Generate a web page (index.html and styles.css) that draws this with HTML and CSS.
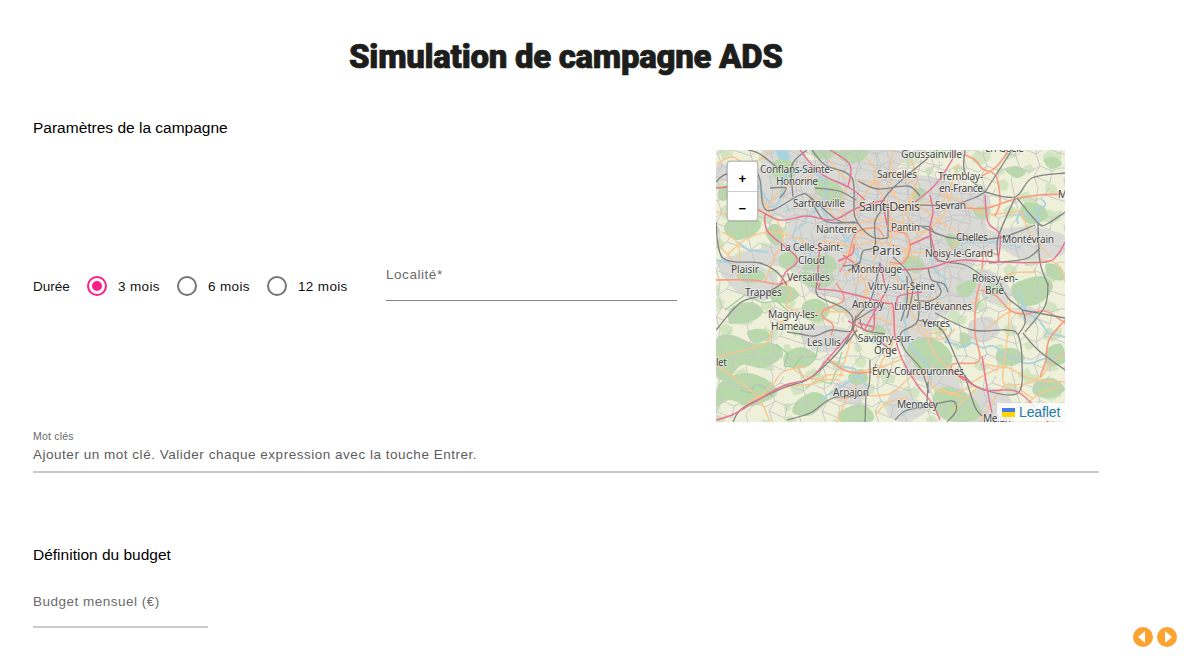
FILE: index.html
```html
<!DOCTYPE html>
<html lang="fr">
<head>
<meta charset="utf-8">
<title>Simulation de campagne ADS</title>
<link rel="stylesheet" href="styles.css">
</head>
<body>
<main class="page">
  <h1 class="title">Simulation de campagne ADS</h1>
  <h2 class="section-title">Paramètres de la campagne</h2>
  <div class="params">
    <div class="duration">
      <span class="duration-label">Durée</span>
      <label class="radio"><span class="dot checked"></span><span class="w3">3 mois</span></label>
      <label class="radio"><span class="dot"></span><span class="w3">6 mois</span></label>
      <label class="radio"><span class="dot"></span><span class="w12">12 mois</span></label>
    </div>
    <div class="locality"><span class="field-label">Localité*</span></div>
    <div class="map">
      <svg class="map-canvas" viewBox="716 150 349 272" preserveAspectRatio="none">
        <defs>
          <pattern id="lanes" width="53" height="47" patternUnits="userSpaceOnUse">
            <path d="M0 12L9 15L17 8L29 13L38 7L53 12M9 15L13 27L4 38L6 47M29 13L33 25L27 35L31 47M13 27L24 31L33 25L45 30L53 27M0 27L13 27M38 7L42 0M6 0L9 15M45 30L43 42L27 35M31 0L29 13"/>
          </pattern>
          <pattern id="woods" width="71" height="59" patternUnits="userSpaceOnUse">
            <path d="M3 5l7-3 5 5-3 7-8-2zM25 18l9-4 3 6 7 1-2 8-11 1-2-6-5-1zM52 6l9 2 4 8-8 1-6-4zM9 33l6-5 8 4-1 7-9 3zM49 37l6-5 5 3 8-2-1 9-9 5-9-3zM29 49l7-3 5 5-7 5zM2 50l6-1 3 6-7 3z"/>
          </pattern>
          <pattern id="streets" width="31" height="29" patternUnits="userSpaceOnUse">
            <path d="M0 7L8 10L18 5L31 7M8 10L10 21L5 29M18 5L22 16L10 21L0 19M22 16L31 19M22 16L19 29M5 0L8 10M19 0L18 5"/>
          </pattern>
        </defs>
        <path class="land" d="M716 150h349v272H716z"/>
        <path class="wood-dots" d="M716 150h349v272H716z"/>
        <g class="town curved">
          <path d="M765 150l35 0 12 10 45-10 50 0-10 22 30 4 32 8 25 5 7 18-5 20 18 8 0 12-22 8-10 18 8 15-5 22-25 2-18 16 3 28 18 18 12 24-10 4-20-16-26-10-6-26-12-14-20-10-22-6-12-22-25-5-12-18-18-8-38-4 2-12 28-5 14-15-8-14-26-9-8-24 14-16z"/>
          <path d="M718 262l18-6 28 12 14 14-12 18-25-6-15-14zM800 334l18-9 30 5-3 16-28 6zM835 384l20-4 14 10-12 14-20-4zM893 390l18 6 16 14-22 12-18-9zM980 270l18 5 14 18-12 12-17-8zM997 232l32-5 36 9-3 19-36 4-20-8zM970 322l20-5 10 14-14 11-16-4zM970 397l24-8 18 13-8 20-33 0zM718 163l14 6-4 11-10 0zM1022 306l14 4-1 12-12-2z"/>
        </g>
        <g class="wood curved">
          <path d="M773 163l10-5 10 5 3 11-11 5-13-4zM812 150l26 0-8 8-14 0zM841 150l26 0-3 9-14 4-11-5zM820 177l17 6 8 12-9 8-14-5-8-10zM727 222l18-5 16 5-6 12-18 6-12-8zM765 232l9-8 9 5-1 13-8 3zM719 190l7-5 6 8-8 8-6-4zM837 265l-8-10-16 2-10 12 12 4 9-4 5 6zM780 256l13-4 6 10-10 8-9-5zM739 272l20-2 6 8-12 5-14-3zM799 275l18-6 17 8-6 9-19 1zM903 258l13-2 9 9-7 8-12-4zM917 188l9 3-5 11-9-4zM945 238l8-4 7 8-7 8zM973 210l12-4 5 8-9 6zM957 286l14-6 6 5-9 12-9-2z"/>
          <path d="M910 344l15-7 17 6 10 13-5 15-15-3-13 3-8-12-4-7zM936 391l14-4 21 9 11 17-14 9-24-4-11-13zM1014 284l27-8 12 10-10 15-18 5-12-9zM986 288l8-5 9 8-10 5zM947 403l17-6 7 16-13 9-16-5zM716 340l16-5 20 8 21 0 10 12-19 13-22-3-14 14-12-4zM720 383l26-10 23 8 7 13-24 12-22-6-14 6zM731 308l20-6 12 9-11 10-22 2zM786 353l16-6 15 9-13 12-19-4zM803 304l14-5 13 10-9 12-16-3zM747 332l15-3 8 8-15 6zM797 401l17-9 13 8-16 15-18-2zM848 376l14-7 6 11-13 5zM868 330l9-6 9 7-7 8zM998 351l15-3 12 10-14 8-14-5zM1046 350l15-6 4 18-17 3zM1035 383l17-5 13 11-14 9-17-4zM960 333l9 2 2 9-9 3zM1025 203l18 3 4 12-16 6-11-9zM1005 170l11-4 10 6-9 6zM1044 160l10-3 8 7-11 5zM1046 264l15 3 2 13-14-3zM771 290l18-4 10 9-12 8-15-3zM840 412l20-8 13 9-3 9-28 0z"/>
        </g>
        <path class="contour" d="M740 390l10 3 5-9 10 4 7 8M725 310l20-15 18 8 14-2 11 10M776 344l12 10-4 12 14 2 7 12 14-6 5-12 14 2 4-12M794 366l8-9 14-1 2-10 13-3M805 388l14-8 12 4 5-13M820 150l8 10M974 315l5-13 9-5"/>
        <path class="lanes" d="M716 150h349v272H716z"/>
        <path class="streets" d="M778 180L805 150H925L975 190L960 300L900 345L850 330L795 270z"/>
        <g class="water">
          <path d="M783 195c-6-22 8-24 23-24c20 4 25 15 17 28c-6 12-15 16-18 22M761 179c-2 16 2 28 11 28c10-2 7-10 10-17c-5-14 8-22 22-18M807 222c-16 8-18 18-8 22c14 4 14 14 6 18M833 223c-8-8-14-12-10-22M908 288c-9-12-20-20-28-24c-11-3-23-3-27-16l-10-15M908 288c-4 16-8 20-2 38c-4 14 4 18 14 30c15 14 8 24 8 36M927 248l9 24 9 6-1 12M960 246c9-8 17-2 25-4c8 2 15-4 23 2l13 4M945 322c10 5 6 14 0 20c12 0 14 8 22 4c8-10 11 7 22 0c10-2 11 10 20 11c13 4 16 9 27 5c10-8 13 4 29-9M716 260l14 3 8 8 11 9M738 242l10 8 20 2M902 416c8-11 18-14 25-12M840 366l15 3 12 18M820 400l25-16 17-10M1018 290l9 23 12 7 9 13 17 4M752 176l18 28M865 340l20 5 6 11"/>
          <path class="lake" d="M777 151l9-1 4 8-7 2-5-4z"/>
          <path d="M1041 199c8 5 4 10-5 9c-3 6 6 8 3 14c-6-2-8-8-16-9c-7-2-6 8-5 11M786 205l4 7M1021 305l4 15M852 234l-8 8"/>
        </g>
        <g class="primary curved">
          <path d="M716 164l16-7 13 6 18-5 7-8M745 163l-3 20 22 18 7 17M716 212l30 4 20-8 16-20 20-5 18-18M728 254l20-16 25-6 25 7 17 8 28-5M740 260l-3-18-15-10M716 242l15 17 12 22M765 283l8-24 10-17-6-22M716 358l24-7 26-8 8-16 16-9M716 365l18 12 24 20M758 398l15-14 10-12 22-6M758 398l32-12 22-2 16-9 16 0M743 409l15-11 12 24M840 377l16-54 14-38M837 422l10-24 10-12M840 380l-30-2-18-10M784 283l7 10-4 14 26 8M816 312l28 0 10 4 23 2 20 8M837 401l18-5 34-2 22-17 22-10"/>
          <path d="M829 160l18 19 30 5 22 18 6 32M845 188l-3 28 17 16 26 6 22-9M860 201l14-18 23-8 19 14-9 23 11 17M873 181l16 29 2 36M852 217l20-14 33 7 26-9M845 232l19-10 28-2 25 12 16-4M851 246l18-17 26-2 13 11-1 15-11 12-26 3-18-8 1-14M821 240l31 6 20-4 26 5 18 13M839 263l12-15M843 277l14-8 9 22-13 18M889 262l8 18 22 24M902 253l18-17 23-20 8-22M910 252l35 0 14-15M866 157l10 18-18 28M911 160l6 20-10 26M893 150l-3 27 5 18M940 193l22 8 23 13 35-3M958 164l-10 29-12 16M918 205l32 23 35 14M835 218l-10-14-16-9M876 245l-5 26-17 14M878 294l14 16 1 32-11 19-5 17M915 277l-6 17 4 21 16 18 18-4"/>
          <path d="M908 326l18 10 8 17 12 13 22 16 15-6 22-9 26 12 39 3M985 331l24-19 18 4M1010 300l-2 33-5 37 2 14 17 0M1005 384l-15 21-10 17M940 389l14 4 22-8M952 411l24-22M925 371l10 18 28 8M1005 368l-22-4M1032 398l-12-11 20-9 12-16 13-8M1018 416l18-20 24-10M1040 259l17 5 8 18M1021 210l9 23 21 24M1000 280l12-7 24-1M905 302l14 3 14-6 13 8 18 0 16-8M857 372l24-5 21-8M876 414l12-12 20-4M955 329l-12 10-13-2"/>
        </g>
        <g class="trunk curved">
          <path d="M965 155l10 5 8 9 13 7 4 26-5 14M965 208l22 0 28-9 25-4 25-1M982 176l14-9 12-15M980 283l-4 18-1 32 5 23-5 7-22 1-1 10M980 290l15 5 16 16 14 3 20-3 20 12M1065 320l-16 20-3 20-6 17M716 280l35 0 30 4 15-9M827 358l17 12 16 3 12-1M831 335l2-10-10-8 1-7 18-8 1-8-7-11M982 269l3-17 13 3M884 237l-8-9-20 5-7 21-9 18M890 262l13 1 7-14-4-15-18-3"/>
        </g>
        <g class="rail curved">
          <path d="M812 150l13 15 27 13 3 39 17 20 16 1M928 158l-35 30-13 17M716 182l11-8 30-1 6 32 10 5 27-15 10 2 27 23 20 3M793 197l-1-32 15-15M716 222l7 36 37 5 17 9 10 13M716 330l24-27 23-8 20-12M817 283l1 13 25 12 10 13-10 25-33 32-27 10-40 20-10 14M787 332l13 2 15 2 16-6 20 1 5-15M787 420l23-7 23-15 33-5 4-33M866 393l-1 29M858 181l20 8 30-3 12 10M856 200l-17-9-24-3M855 222l-30-1-15-24"/>
          <path d="M916 205l35 0 23-7 11-6M985 192l30 5 17-19 33-5M985 192l27-42M1017 198l21 25 9 1 18-12M1015 198l-17 40 1 23M1038 223l2 39 8 23M922 227l30 11 46 0 37-13M930 227l5 31 30 7 20 13 6 5M965 150l0 23 20 19M950 238l-15-5-5-6-11-1M928 268l4 12 12 4 4 8M989 263l36-4 15-11M780 170l-20-16-12-4M770 188l16 0-6 10M888 238l0-34M893 257l14 14 6 17-6 30M887 204l-12 17 0 25-12 5-4 12-16 3M848 271l12-8"/>
          <path d="M935 313l37 17 33 0 13 5 4 28-4 30-33-3-20-14-23-46-24-10M1018 335l7-12-3-13-14-12-8-15M1023 333l15 17 27 20M1022 310l43 8M965 376l10 31 7 9M1048 283l-3 23-20 26M917 283l1 37-17 13 4 17 16 19 8 24M907 276l0 24-6 21M859 340l-6-17 18-24 9-36M895 420l10-9 20-4 27-6 4 10-9 11M846 344l11-14M856 320l29-18M937 283l4 10-11 8-16-1M928 382l-1 20M941 330l-8-8M860 319l4 11 21 4"/>
        </g>
        <g class="motorway curved">
          <path d="M800 150l20 23 30 15 15 12M830 150l20 15-2 22M757 209l23 11 27-4 26 4 24-12 28-8M765 213l3 19 29 26-12 15-5 13M820 242l-3 43M915 202l20-17 17-25 3-10M930 195l3 17-3 20 8 30M985 195l3 27 12 13-2 27M948 262l17-2 30 2 50 0 13-8 7-12M910 245l22-10M902 270l27-2 19-6M838 261l14-7 2-10M716 188l12-1M884 210l3 15M843 255l11 8"/>
          <path d="M716 420l16-5 21-12 30-17 27-8 17-18 26-30M818 289l25 3 42 11 8 3 2 30 7 23 16 27 14 17 8 17M885 293l-20 36M874 306l-2 25-24-10M858 323l16 4M880 263l5 22M897 306l2-10 23-4M982 356l6 37 4 20M958 376l27 14 33 2 30 30M880 341l15 13M820 283l-2 6M949 370l18 9"/>
        </g>
        <g class="place">
          <text x="901" y="158" textLength="61">Goussainville</text><text x="985" y="152" textLength="39">en-Goële</text>
          <text x="760" y="173" textLength="73">Conflans-Sainte-</text><text x="776" y="185" textLength="42">Honorine</text>
          <text x="877" y="178" textLength="40">Sarcelles</text><text x="938" y="180" textLength="45">Tremblay-</text><text x="939" y="192" textLength="44">en-France</text>
          <text x="793" y="207" textLength="52">Sartrouville</text><text class="big" x="859" y="211" textLength="61">Saint-Denis</text><text x="935" y="209" textLength="31">Sevran</text><text x="1058" y="198">M</text>
          <text x="816" y="233" textLength="41">Nanterre</text><text x="891" y="231" textLength="29">Pantin</text><text x="956" y="241" textLength="32">Chelles</text><text x="1002" y="243" textLength="52">Montévrain</text>
          <text x="780" y="251" textLength="63">La Celle-Saint-</text><text x="798" y="264" textLength="27">Cloud</text><text class="big" x="872" y="255" textLength="29">Paris</text><text x="925" y="257" textLength="68">Noisy-le-Grand</text>
          <text x="731" y="273" textLength="28">Plaisir</text><text x="787" y="281" textLength="43">Versailles</text><text x="851" y="273" textLength="51">Montrouge</text><text x="972" y="282" textLength="46">Roissy-en-</text><text x="985" y="294" textLength="19">Brie</text>
          <text x="745" y="296" textLength="37">Trappes</text><text x="868" y="290" textLength="67">Vitry-sur-Seine</text><text x="852" y="308" textLength="32">Antony</text><text x="894" y="310" textLength="78">Limeil-Brévannes</text>
          <text x="922" y="327" textLength="28">Yerres</text><text x="768" y="318" textLength="50">Magny-les-</text><text x="771" y="330" textLength="44">Hameaux</text><text x="807" y="346" textLength="34">Les Ulis</text>
          <text x="858" y="342" textLength="56">Savigny-sur-</text><text x="874" y="354" textLength="23">Orge</text><text x="716" y="366" textLength="11">let</text><text x="872" y="375" textLength="92">Évry-Courcouronnes</text>
          <text x="833" y="396" textLength="36">Arpajon</text><text x="897" y="408" textLength="41">Mennecy</text><text x="983" y="422" textLength="28">Melun</text>
        </g>
      </svg>
      <div class="zoom"><span class="zoom-btn">+</span><span class="zoom-btn">−</span></div>
      <div class="credit"><span class="flag"></span><span>Leaflet</span></div>
    </div>
  </div>
  <div class="keywords">
    <span class="small-label">Mot clés</span>
    <span class="hint">Ajouter un mot clé. Valider chaque expression avec la touche Entrer.</span>
  </div>
  <h2 class="section-title budget-title">Définition du budget</h2>
  <div class="budget"><span class="field-label budget-label">Budget mensuel (€)</span></div>
</main>
<nav class="pager">
  <svg viewBox="0 0 20 20"><circle cx="10" cy="10" r="10"/><path d="M12 4v12L5 10z"/></svg>
  <svg viewBox="0 0 20 20"><circle cx="10" cy="10" r="10"/><path d="M8 4v12l7-6z"/></svg>
</nav>
<script src="map.js"></script>
</body>
</html>
```
FILE: styles.css
```css
* { box-sizing: border-box; }
body { margin: 0; height: 656px; overflow: hidden; background: #fff; font-family: "Liberation Sans", Arial, sans-serif; color: #111; }
.page { width: 1099px; padding-left: 33px; }
.title { margin: 0; padding-top: 37px; height: 118px; padding-left: 316px; font: 900 33px/40px Roboto, sans-serif; color: #1d1d1b; white-space: nowrap; letter-spacing: -0.3px; -webkit-text-stroke: .7px #1d1d1b; }
.section-title { margin: 0; font-size: 15.5px; line-height: 20px; font-weight: 400; color: #000; white-space: nowrap; }
.params { display: flex; align-items: flex-start; margin-top: 12px; height: 272px; }
.duration { display: flex; align-items: center; width: 353px; height: 272px; font-size: 13.5px; white-space: nowrap; }
.duration-label { width: 54px; }
.radio { display: flex; align-items: center; gap: 11px; letter-spacing: .35px; }
.w3 { width: 59px; }
.w12 { width: 52px; }
.dot { width: 20px; height: 20px; border: 2px solid #757575; border-radius: 50%; display: grid; place-items: center; }
.dot.checked { border-color: #fa1e8c; }
.dot.checked::after { content: ""; width: 10px; height: 10px; border-radius: 50%; background: #fa1e8c; }
.locality { width: 291px; height: 36px; margin-top: 115px; border-bottom: 1px solid #858585; }
.field-label { display: block; font-size: 13.5px; line-height: 20px; letter-spacing: .55px; color: #6b6b6b; }
.map { position: relative; width: 349px; height: 272px; margin-left: 39px; overflow: hidden; flex: none; }
.map-canvas { display: block; width: 349px; height: 272px; }
.map-canvas path { stroke-linejoin: round; }
.land { fill: #eef0d9; }
.wood-dots { fill: url(#woods); opacity: .7; }
#woods path { fill: #c8dfb5; }
.town { fill: #d9d9d6; }
.wood { fill: #b9d8ab; }
.contour { fill: none; stroke: #9bd09b; stroke-width: 1.2; }
.lanes { fill: url(#lanes); }
#lanes path { fill: none; stroke: #c6c6c8; stroke-width: .9; }
.streets { fill: url(#streets); opacity: .75; }
#streets path { fill: none; stroke: #c2c0c3; stroke-width: 1; }
.water { fill: none; stroke: #a9d3df; stroke-width: 1.8; }
.lake { fill: #a9d3df; }
.primary, .trunk, .rail, .motorway { fill: none; }
.primary { stroke: #fbc58c; stroke-width: 1.35; }
.trunk { stroke: #fa9a80; stroke-width: 1.6; }
.rail { stroke: #848484; stroke-width: 1.3; }
.motorway { stroke: #ea7092; stroke-width: 1.4; }
.place { font-family: "Noto Sans", sans-serif; font-size: 10.2px; fill: #454545; stroke: #fff; stroke-opacity: .5; stroke-width: 1.6px; paint-order: stroke; stroke-linejoin: round; }
.place .big { font-size: 12.4px; }
.zoom { position: absolute; left: 11px; top: 11px; width: 31px; height: 60px; border: 1px solid rgba(0,0,0,.25); border-radius: 3px; background: #fff; box-shadow: 0 0 0 .5px rgba(0,0,0,.2); }
.zoom-btn { display: block; height: 29px; font: bold 13px/35px "Liberation Mono", monospace; text-align: center; color: #000; }
.zoom-btn + .zoom-btn { border-top: 1px solid #ccc; }
.credit { position: absolute; right: 0; bottom: 1px; width: 68px; height: 18px; padding-left: 5px; display: flex; align-items: center; gap: 4px; background: rgba(255,255,255,.8); font-size: 14px; letter-spacing: -.1px; color: #1c7cab; }
.flag { width: 13px; height: 9px; background: linear-gradient(#4c7be1 50%, #ffd500 50%); }
.keywords { height: 43px; margin-top: 8px; border-bottom: 2px solid #c9c9c9; width: 1066px; }
.small-label { display: block; font-size: 10.5px; line-height: 13px; letter-spacing: .2px; color: #6b6b6b; }
.hint { display: block; margin-top: 2px; font-size: 13.5px; line-height: 20px; letter-spacing: .52px; color: #5c5c5c; white-space: nowrap; }
.budget-title { margin-top: 72px; }
.budget { width: 175px; height: 36px; margin-top: 27px; border-bottom: 2px solid #cbcbcb; }
.budget-label { letter-spacing: .5px; }
.pager { position: absolute; right: 9px; bottom: 9px; display: flex; gap: 4px; }
.pager svg { width: 20px; height: 20px; fill: #fba22f; }
.pager path { fill: #fff; }
```
FILE: map.js
```js
// Rounds the polylines of roads, rails and land areas into smooth curves.
function curve(points, closed) {
  const n = points.length;
  const at = i => closed ? points[(i + n) % n] : points[Math.max(0, Math.min(n - 1, i))];
  let d = 'M' + points[0].join(' ');
  for (let i = 0; i < (closed ? n : n - 1); i++) {
    const [a, b, c, e] = [at(i - 1), at(i), at(i + 1), at(i + 2)];
    d += 'C' + [b[0] + (c[0] - a[0]) / 6, b[1] + (c[1] - a[1]) / 6,
      c[0] - (e[0] - b[0]) / 6, c[1] - (e[1] - b[1]) / 6, c[0], c[1]].join(' ');
  }
  return closed ? d + 'z' : d;
}
document.querySelectorAll('.curved path').forEach(path => {
  const parts = path.getAttribute('d').match(/M[^M]+/g);
  path.setAttribute('d', parts.map(part => {
    const v = part.match(/-?\d+(\.\d+)?/g).map(Number);
    const points = [[v[0], v[1]]];
    for (let i = 2; i + 1 < v.length; i += 2) {
      const last = points[points.length - 1];
      points.push([last[0] + v[i], last[1] + v[i + 1]]);
    }
    return curve(points, part.endsWith('z'));
  }).join(''));
});
```
